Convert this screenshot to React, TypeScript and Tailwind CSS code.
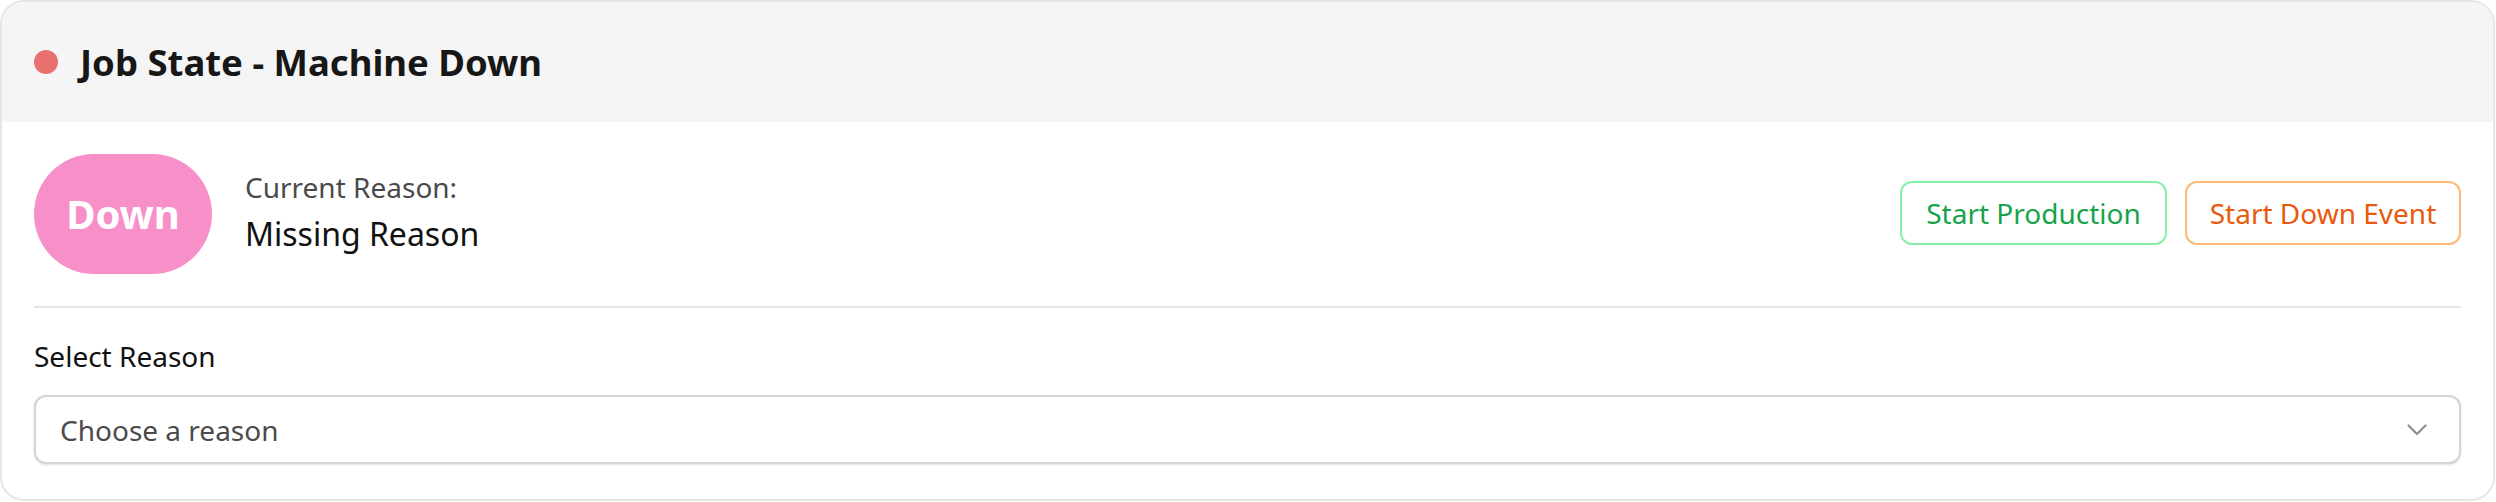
import React from 'react';

function Chevron() {
  return (
    <svg width="20" height="12" viewBox="0 0 20 12" fill="none" className="shrink-0">
      <path d="M1.5 1.5 L10 10 L18.5 1.5" stroke="#8a8f98" strokeWidth="2.2" strokeLinecap="round" strokeLinejoin="round" />
    </svg>
  );
}

export default function App() {
  return (
    <div className="w-[2496px] h-[502px] bg-white font-['Noto_Sans',sans-serif]">
      <div className="h-[501px] w-[2495px] rounded-[24px] border-2 border-[#e6e6e6] overflow-hidden bg-white">
        {/* header */}
        <div className="h-[120px] bg-[#f5f5f5] flex items-center pl-[32px] gap-[22px]">
          <span className="h-[24px] w-[24px] rounded-full bg-[#ea7070]" />
          <h1 className="text-[36.5px] leading-[48px] font-bold text-[#171717]">Job State - Machine Down</h1>
        </div>

        <div className="px-[32px] pt-[32px]">
          {/* status row */}
          <div className="flex items-center justify-between h-[120px]">
            <div className="flex items-center gap-[33px]">
              <div className="h-[120px] w-[178px] rounded-full bg-[#f78fc8] flex items-center justify-center">
                <span className="text-[40px] leading-[52px] font-bold text-white">Down</span>
              </div>
              <div className="flex flex-col gap-[5px] pb-[6px]">
                <span className="text-[28px] leading-[40px] text-[#4a4a4a]">Current Reason:</span>
                <span className="text-[32px] leading-[44px] text-[#111111]">Missing Reason</span>
              </div>
            </div>
            <div className="flex items-center gap-[18px] pb-[2px]">
              <button className="h-[64px] w-[267px] rounded-[12px] border-2 border-[#86efac] bg-white text-[28px] leading-[40px] text-[#16a34a]">
                Start Production
              </button>
              <button className="h-[64px] w-[276px] rounded-[12px] border-2 border-[#fdba74] bg-white text-[28px] leading-[40px] text-[#ea580c]">
                Start Down Event
              </button>
            </div>
          </div>

          <div className="mt-[32px] border-t-2 border-[#e5e5e5]" />

          {/* reason select */}
          <div className="mt-[28px] text-[28px] leading-[40px] text-[#111111]">Select Reason</div>
          <div className="mt-[19px] h-[69px] rounded-[12px] border-2 border-[#d4d4d8] bg-white shadow-sm flex items-center justify-between pl-[24px] pr-[32px]">
            <span className="text-[28px] leading-[40px] text-[#4b4b4b]">Choose a reason</span>
            <Chevron />
          </div>
        </div>
      </div>
    </div>
  );
}
